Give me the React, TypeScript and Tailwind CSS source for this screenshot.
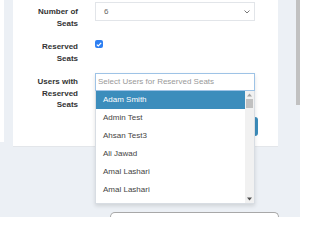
const USERS = ["Adam Smith", "Admin Test", "Ahsan Test3", "Ali Jawad", "Amal Lashari", "Amal Lashari"];

function Label({ lines }: { lines: string[] }) {
  return (
    <div className="w-[65px] shrink-0 pt-[4px] text-right text-[8px] leading-[11.5px] font-bold text-[#333]">
      {lines.map((l, i) => (
        <div key={i}>{l}</div>
      ))}
    </div>
  );
}

function UserDropdown() {
  return (
    <div className="absolute left-0 top-[1px] z-10 w-[160px] shadow-[0_2px_4px_rgba(0,0,0,0.12)]">
      <div className="h-[18px] border border-[#9ec3e6] bg-white px-[2px] text-[8px] leading-[16px] text-[#999]">
        Select Users for Reserved Seats
      </div>
      <div className="flex h-[113px] overflow-hidden border border-t-0 border-[#d8dde3] bg-white">
        <div className="flex-1">
          {USERS.map((u, i) => (
            <div
              key={i}
              className={
                i === 0
                  ? "h-[18px] bg-[#3c8dbc] pl-[7px] text-[8px] leading-[18px] text-white"
                  : "h-[18px] pl-[7px] text-[8px] leading-[18px] text-[#444]"
              }
            >
              {u}
            </div>
          ))}
        </div>
        <div className="flex w-[9px] flex-col items-center bg-[#f1f1f1] py-[2px]">
          <svg width="5" height="4" viewBox="0 0 5 4">
            <path d="M0 3.5 L2.5 0.5 L5 3.5 Z" fill="#a3a3a3" />
          </svg>
          <div className="mt-[2px] h-[9px] w-[7px] bg-[#c1c1c1]" />
          <div className="flex-1" />
          <svg width="5" height="4" viewBox="0 0 5 4">
            <path d="M0 0.5 L2.5 3.5 L5 0.5 Z" fill="#505050" />
          </svg>
        </div>
      </div>
    </div>
  );
}

export default function App() {
  return (
    <div className="flex h-[217px] w-[300px] overflow-hidden bg-[#ecf0f5] font-['Liberation_Sans',Arial,sans-serif]">
      <div className="flex flex-1 flex-col">
        <div className="flex items-start">
          <div className="h-[142px] w-[4px] bg-white" />
          <div className="ml-[9px] h-[147px] w-[265px] border-b border-[#e3e6ea] bg-white pr-[23px] pt-[2px]">
            {/* Number of Seats */}
            <div className="flex gap-[17px]">
              <Label lines={["Number of", "Seats"]} />
              <div className="flex h-[19px] w-[160px] items-center justify-between border border-[#e2e5e9] bg-white pl-[8px] pr-[4px] text-[8px] text-[#666]">
                <span>6</span>
                <svg width="6" height="4" viewBox="0 0 6 4">
                  <path d="M0.5 0.5 L3 3 L5.5 0.5" fill="none" stroke="#777" strokeWidth="1" />
                </svg>
              </div>
            </div>

            {/* Reserved Seats */}
            <div className="mt-[8px] flex gap-[17px]">
              <Label lines={["Reserved", "Seats"]} />
              <div className="pt-[3px]">
                <span className="flex h-[8px] w-[8px] items-center justify-center rounded-[2px] bg-[#2d7ff2]">
                  <svg width="6" height="5" viewBox="0 0 6 5">
                    <path d="M0.8 2.6 L2.3 4 L5.2 0.8" fill="none" stroke="#fff" strokeWidth="1.2" />
                  </svg>
                </span>
              </div>
            </div>

            {/* Users with Reserved Seats */}
            <div className="mt-[8px] flex gap-[17px]">
              <Label lines={["Users with", "Reserved", "Seats"]} />
              <div className="relative w-[160px]">
                <UserDropdown />
              </div>
            </div>

            <div className="mt-[6px] flex justify-end pr-0">
              <button className="mr-[-3px] h-[19px] w-[40px] rounded-[3px] bg-[#3c8dbc] text-[8px] text-white">
                Save
              </button>
            </div>
          </div>
        </div>
        <div className="ml-[110px] mt-[65px] h-[20px] w-[169px] rounded-t-[5px] border-[1.5px] border-b-0 border-[#a8a8a8] bg-white" />
      </div>
      <div className="w-[4px]">
        <div className="h-[105px] w-[4px] bg-[#c1c1c1]" />
      </div>
    </div>
  );
}
